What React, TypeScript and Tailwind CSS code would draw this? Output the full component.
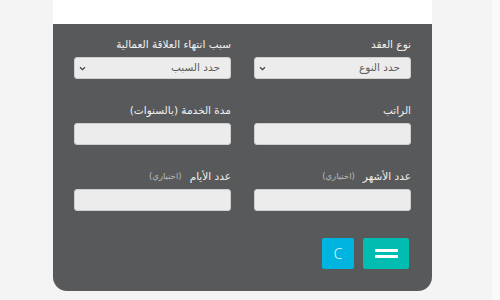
import React from "react";

const font = { fontFamily: '"DejaVu Sans", "Noto Sans", sans-serif' };

function Chevron() {
  return (
    <svg width="7" height="5" viewBox="0 0 7 5" className="block">
      <path d="M1 1.2 L3.5 3.6 L6 1.2" fill="none" stroke="#444" strokeWidth="1.3" />
    </svg>
  );
}

function Label({ text, optional }: { text: string; optional?: boolean }) {
  return (
    <div className="h-[13px] flex items-center gap-[8px] leading-none">
      <span className="text-[10.5px] text-[#f0f0f0]">{text}</span>
      {optional && <span className="text-[8.5px] text-[#b9b9bb]">(اختياري)</span>}
    </div>
  );
}

function SelectBox({ label, placeholder }: { label: string; placeholder: string }) {
  return (
    <div className="flex flex-col gap-[6px]">
      <Label text={label} />
      <div className="h-[22px] bg-[#ececec] border border-[#cfcfcf] rounded-[3px] flex items-center justify-between pr-[10px] pl-[4px]">
        <span className="text-[10.5px] text-[#5c5c5c]">{placeholder}</span>
        <Chevron />
      </div>
    </div>
  );
}

function InputBox({ label, optional }: { label: string; optional?: boolean }) {
  return (
    <div className="flex flex-col gap-[6px]">
      <Label text={label} optional={optional} />
      <div className="h-[22px] bg-[#ececec] border border-[#cfcfcf] rounded-[3px]" />
    </div>
  );
}

export default function App() {
  return (
    <div className="h-[300px] w-[500px] bg-[#f4f4f4] overflow-hidden flex" style={font}>
      <div className="ml-[53px] w-[379px] flex flex-col">
        <div className="h-[24px] bg-white" />
        <div
          dir="rtl"
          className="h-[267px] bg-[#58595b] rounded-b-[14px] px-[21px] pt-[14px] pb-[23px] flex flex-col"
        >
          <div className="grid grid-cols-2 gap-x-[23px] gap-y-[25px]">
            <SelectBox label="نوع العقد" placeholder="حدد النوع" />
            <SelectBox label="سبب انتهاء العلاقة العمالية" placeholder="حدد السبب" />
            <InputBox label="الراتب" />
            <InputBox label="مدة الخدمة (بالسنوات)" />
            <InputBox label="عدد الأشهر" optional />
            <InputBox label="عدد الأيام" optional />
          </div>
          <div className="mt-[27px] flex gap-[9px] pr-[2px]">
            <button className="w-[46px] h-[31px] bg-[#00bcb1] rounded-[2px] flex flex-col items-center justify-center gap-[3px]">
              <span className="block w-[23px] h-[3px] bg-white rounded-[1px]" />
              <span className="block w-[23px] h-[3px] bg-white rounded-[1px]" />
            </button>
            <button className="w-[32px] h-[31px] bg-[#00b4e0] rounded-[2px] flex items-center justify-center text-white text-[14px] leading-none" style={{ fontFamily: '"Open Sans", sans-serif', fontWeight: 300 }}>
              C
            </button>
          </div>
        </div>
      </div>
      <div className="ml-auto w-[8px] h-full bg-[#fafafa]" />
    </div>
  );
}
